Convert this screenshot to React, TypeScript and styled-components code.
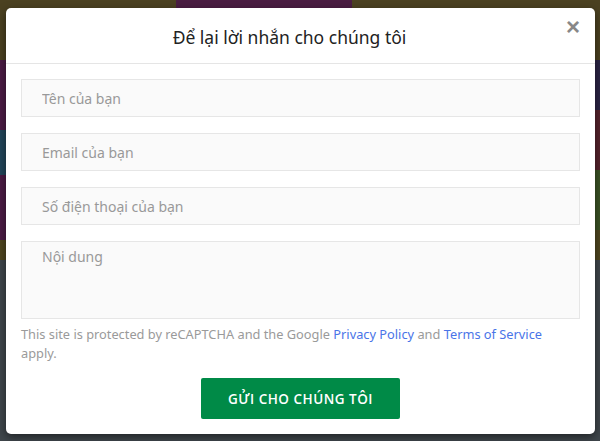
import styled, { createGlobalStyle } from 'styled-components'

const GlobalStyle = createGlobalStyle`
  html, body {
    margin: 0;
    padding: 0;
    width: 600px;
    height: 441px;
    overflow: hidden;
  }
  * {
    box-sizing: border-box;
  }
`

export default function App() {
  return (
    <>
      <GlobalStyle />
      <Page>
        <TopBand>
          <Bar color="#4b4121" width="176px" />
          <Bar color="#4a1d42" width="176px" />
          <Bar color="#4b4121" />
        </TopBand>
        <MidBand>
          <SideStack>
            <Stripe color="#4b1b44" height="70px" />
            <Stripe color="#22465a" height="45px" />
            <Stripe color="#4b1b44" height="65px" />
            <Stripe color="#4f4620" height="20px" />
          </SideStack>
          <Spacer />
          <SideStack>
            <Stripe color="#2b2445" height="50px" />
            <Stripe color="#55222c" height="60px" />
            <Stripe color="#3b5225" height="60px" />
            <Stripe color="#4f4620" height="30px" />
          </SideStack>
        </MidBand>
        <BottomBand />
      </Page>

      <Modal>
        <Header>
          <Title>Để lại lời nhắn cho chúng tôi</Title>
          <Close>×</Close>
        </Header>
        <Body>
          <Field placeholder="Tên của bạn" />
          <Field placeholder="Email của bạn" />
          <Field placeholder="Số điện thoại của bạn" />
          <Area placeholder="Nội dung" />
          <Notice>
            This site is protected by reCAPTCHA and the Google <Link>Privacy Policy</Link> and{' '}
            <Link>Terms of Service</Link> apply.
          </Notice>
          <Submit>Gửi cho chúng tôi</Submit>
        </Body>
      </Modal>
    </>
  )
}

const Page = styled.div`
  width: 600px;
  height: 441px;
  display: flex;
  flex-direction: column;
  background: #3b4147;
`

const TopBand = styled.div`
  display: flex;
  height: 60px;
`

const Bar = styled.div<{ color: string; width?: string }>`
  background: ${(p) => p.color};
  flex: ${(p) => (p.width ? `0 0 ${p.width}` : '1')};
`

const MidBand = styled.div`
  display: flex;
  height: 200px;
`

const SideStack = styled.div`
  display: flex;
  flex-direction: column;
  width: 40px;
`

const Stripe = styled.div<{ color: string; height: string }>`
  background: ${(p) => p.color};
  height: ${(p) => p.height};
`

const Spacer = styled.div`
  flex: 1;
`

const BottomBand = styled.div`
  flex: 1;
  background: #3f464b;
`

const Modal = styled.div`
  position: absolute;
  left: 6px;
  top: 8px;
  width: 589px;
  height: 426px;
  background: #fff;
  border-radius: 5px;
  box-shadow: 0 3px 9px rgba(0, 0, 0, 0.5);
  display: flex;
  flex-direction: column;
  font-family: 'Noto Sans', 'Liberation Sans', sans-serif;
`

const Header = styled.div`
  position: relative;
  height: 56px;
  padding-right: 22px;
  border-bottom: 1px solid #e5e5e5;
  display: flex;
  align-items: center;
  justify-content: center;
`

const Title = styled.h4`
  margin: 0;
  font-size: 17.5px;
  font-weight: 400;
  color: #222;
  padding-top: 2px;
`

const Close = styled.span`
  position: absolute;
  right: 15px;
  top: 5px;
  font-size: 24px;
  font-weight: 700;
  color: #888;
  font-family: 'Liberation Sans', sans-serif;
`

const Body = styled.div`
  padding: 15px 15px 0 15px;
  display: flex;
  flex-direction: column;
  gap: 16px;
`

const Field = styled.input`
  height: 38px;
  width: 100%;
  background: #fafafa;
  border: 1px solid #e6e6e6;
  padding: 0 20px;
  font-family: inherit;
  font-size: 14px;
  outline: none;

  &::placeholder {
    color: #999;
  }
`

const Area = styled.textarea`
  height: 78px;
  width: 100%;
  background: #fafafa;
  border: 1px solid #e6e6e6;
  padding: 5px 20px;
  font-family: inherit;
  font-size: 14px;
  resize: none;
  outline: none;

  &::placeholder {
    color: #999;
  }
`

const Notice = styled.p`
  margin: -10px 0 0 0;
  max-width: 545px;
  font-size: 12.8px;
  line-height: 19px;
  color: #9a9a9a;
`

const Link = styled.a`
  color: #4a74e8;
`

const Submit = styled.button`
  align-self: center;
  margin-top: -1px;
  width: 199px;
  height: 41px;
  border: none;
  border-radius: 2px;
  background: #008a47;
  color: #fff;
  font-family: 'Open Sans', sans-serif;
  font-size: 13.5px;
  font-weight: 600;
  text-transform: uppercase;
  letter-spacing: 0.5px;
`
